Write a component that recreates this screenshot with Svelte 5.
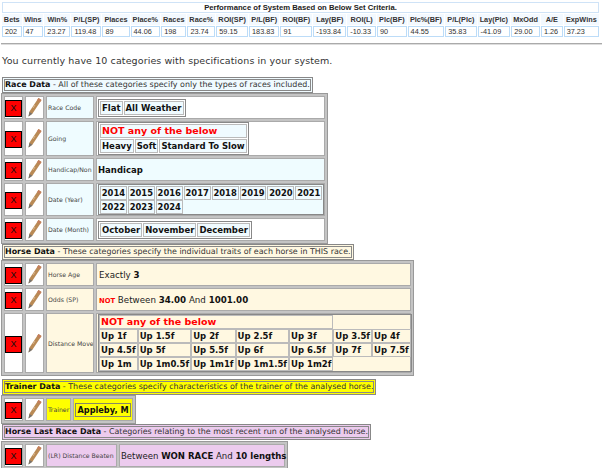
<script>
  const heads = ['Bets','Wins','Win%','P/L(SP)','Places','Place%','Races','Race%','ROI(SP)','P/L(BF)','ROI(BF)','Lay(BF)','ROI(L)','Plc(BF)','Plc%(BF)','P/L(Plc)','Lay(Plc)','MxOdd','A/E','ExpWins'];
  const vals = ['202','47','23.27','119.48','89','44.06','198','23.74','59.15','183.83','91','-193.84','-10.33','90','44.55','35.83','-41.09','29.00','1.26','37.23'];
  const years1 = ['2014','2015','2016','2017','2018','2019','2020','2021'];
  const years2 = ['2022','2023','2024'];
  const dist = [
    ['Up 1f','Up 1.5f','Up 2f','Up 2.5f','Up 3f','Up 3.5f','Up 4f'],
    ['Up 4.5f','Up 5f','Up 5.5f','Up 6f','Up 6.5f','Up 7f','Up 7.5f'],
    ['Up 1m','Up 1m0.5f','Up 1m1f','Up 1m1.5f','Up 1m2f']
  ];
</script>

{#snippet tools(h)}
  <td class="btn" style="height:{h}px"><span class="x">X</span></td>
  <td class="pen">
    <svg width="15" height="21" viewBox="0 0 15 21">
      <path d="M11.5 1 L14.5 3 L5.5 16.5 L1.5 19.5 L2.5 14.5 Z" fill="#b98a55" />
      <path d="M11.5 1 L14.5 3 L13 5.2 L10 3.2 Z" fill="#c47f5c" />
      <path d="M8 8 L6 11" stroke="#d8b389" stroke-width="1" />
      <path d="M2.4 15 L5.4 16.8 L1.5 19.5 Z" fill="#77736e" />
    </svg>
  </td>
{/snippet}

{#snippet chips(list)}
  <table class="chips"><tbody><tr>
    {#each list as c}<td>{c}</td>{/each}
  </tr></tbody></table>
{/snippet}

<table class="perf">
  <tbody>
    <tr><th colspan="20" class="ttl">Performance of System Based on Below Set Criteria.</th></tr>
    <tr>{#each heads as h}<th>{h}</th>{/each}</tr>
    <tr>{#each vals as v}<td>{v}</td>{/each}</tr>
  </tbody>
</table>
<hr />
<p class="intro">You currently have 10 categories with specifications in your system.</p>

<div class="head blue"><b>Race Data</b> - All of these categories specify only the types of races included.</div>
<table class="cat race">
  <tbody>
    <tr>
      {@render tools(20)}
      <td class="lab tint">Race Code</td>
      <td class="val">{@render chips(['Flat','All Weather'])}</td>
    </tr>
    <tr>
      {@render tools(32)}
      <td class="lab tint">Going</td>
      <td class="val">
        <table class="chips">
          <tbody>
            <tr><td class="no" colspan="3">NOT any of the below</td></tr>
            <tr><td>Heavy</td><td>Soft</td><td>Standard To Slow</td></tr>
          </tbody>
        </table>
      </td>
    </tr>
    <tr>
      {@render tools(21)}
      <td class="lab tint">Handicap/Non</td>
      <td class="val tint strong">Handicap</td>
    </tr>
    <tr>
      {@render tools(31)}
      <td class="lab tint">Date (Year)</td>
      <td class="val tint">
        <div class="wrapbox">
          <div class="line">{#each years1 as y}<span>{y}</span>{/each}</div>
          <div class="line">{#each years2 as y}<span>{y}</span>{/each}</div>
        </div>
      </td>
    </tr>
    <tr>
      {@render tools(20)}
      <td class="lab tint">Date (Month)</td>
      <td class="val">{@render chips(['October','November','December'])}</td>
    </tr>
  </tbody>
</table>

<div class="head cream"><b>Horse Data</b> - These categories specify the individual traits of each horse in THIS race.</div>
<table class="cat horse">
  <tbody>
    <tr>
      {@render tools(21)}
      <td class="lab cr">Horse Age</td>
      <td class="val cr txt">Exactly <b>3</b></td>
    </tr>
    <tr>
      {@render tools(20)}
      <td class="lab cr">Odds (SP)</td>
      <td class="val cr txt"><b class="not">NOT</b> Between <b>34.00</b> And <b>1001.00</b></td>
    </tr>
    <tr>
      {@render tools(58)}
      <td class="lab cr">Distance Move</td>
      <td class="val cr">
        <table class="chips dist">
          <tbody>
            <tr><td class="no" colspan="5">NOT any of the below</td></tr>
            {#each dist as row}
              <tr>{#each row as d}<td>{d}</td>{/each}</tr>
            {/each}
          </tbody>
        </table>
      </td>
    </tr>
  </tbody>
</table>

<div class="head yellow"><b>Trainer Data</b> - These categories specify characteristics of the trainer of the analysed horse.</div>
<table class="cat trainer-t">
  <tbody>
    <tr>
      {@render tools(19)}
      <td class="lab yel">Trainer</td>
      <td class="val yel trainer"><span>Appleby, M</span></td>
    </tr>
  </tbody>
</table>

<div class="head pink"><b>Horse Last Race Data</b> - Categories relating to the most recent run of the analysed horse.</div>
<table class="cat last-t">
  <tbody>
    <tr>
      {@render tools(18)}
      <td class="lab pk">(LR) Distance Beaten</td>
      <td class="val pk txt">Between <b>WON RACE</b> And <b>10 lengths</b></td>
    </tr>
  </tbody>
</table>

<style>
  :global(body) {
    margin: 0;
    background: #fff;
    font-family: "DejaVu Sans", sans-serif;
    color: #222;
    overflow: hidden;
  }
  table {
    border-collapse: separate;
  }
  .perf {
    width: 599px;
    margin: 1px 0 0 1px;
    border-spacing: 1px;
    font-family: "Liberation Sans", Arial, sans-serif;
    font-size: 7.3px;
  }
  .perf th {
    font-weight: bold;
    background: #f3f9ff;
    padding: 1px 1px;
    height: 9px;
    white-space: nowrap;
    color: #333;
  }
  .perf th.ttl {
    background: #fff;
    border: 1px solid #cfe3f7;
    padding: 0;
    color: #222;
    font-size: 7.7px;
  }
  .perf td {
    border: 1px solid #bcdcf8;
    padding: 0 2px;
    height: 9px;
    white-space: nowrap;
    color: #333;
  }
  hr {
    margin: 5px 0 0 1px;
    height: 0;
    border: 0;
    border-top: 1px solid #aaa;
    border-bottom: 1px solid #ddd;
  }
  .intro {
    margin: 10px 0 0 2px;
    font-size: 9.5px;
    line-height: 12px;
    letter-spacing: 0.1px;
    color: #333;
  }
  .head {
    display: table;
    margin: 10px 0 0 2px;
    border: 3px double #888;
    padding: 0;
    font-size: 7.95px;
    line-height: 10px;
    color: #333;
  }
  .head b {
    color: #111;
  }
  .blue {
    background: #f0fbff;
  }
  .cream {
    margin-top: 0;
    background: #fff8e1;
  }
  .yellow {
    margin-top: 3px;
    background: #ff0;
  }
  .pink {
    margin-top: 0;
    background: #eccbee;
  }
  .cat {
    margin-left: 1px;
    border: 1px solid #999;
    border-spacing: 2px;
    background: #c4c4c4;
    table-layout: fixed;
  }
  .race {
    width: 327px;
  }
  .horse {
    width: 413px;
  }
  .trainer-t {
    width: 135px;
  }
  .last-t {
    width: 287px;
    margin-top: 1px;
  }
  .cat > tbody > tr > td {
    border: 1px solid #aaa;
    padding: 0;
  }
  .btn {
    width: 17px;
    text-align: center;
    background: #fff;
  }
  .x {
    display: inline-block;
    width: 15px;
    height: 15px;
    background: #f00;
    border: 1px solid #000;
    color: #111;
    font: 9px/15px "Liberation Sans", Arial, sans-serif;
    vertical-align: middle;
  }
  .pen {
    width: 17px;
    text-align: center;
    background: #fff;
  }
  .pen svg {
    display: block;
    margin: auto;
  }
  .lab {
    width: 44px;
    font-size: 6.2px;
    color: #444;
    white-space: nowrap;
    padding: 0 1px !important;
    overflow: hidden;
  }
  .tint {
    background: #effcff;
  }
  .cr {
    background: #fff8e1;
  }
  .lab.yel {
    background: #ff0;
    width: 21px;
  }
  .val {
    padding: 0 1px !important;
    font-size: 8.7px;
    background: #fff;
    white-space: nowrap;
  }
  .val.cr {
    background: #fff8e1;
  }
  .val.tint {
    background: #effcff;
  }
  .val.yel {
    background: #ff0;
  }
  .val.pk {
    background: #eccbee;
    font-size: 8.55px;
    padding-left: 1px !important;
  }
  .lab.pk {
    background: #eccbee;
    width: 67px;
  }
  .strong {
    font-weight: bold;
    font-size: 8.5px;
    color: #111;
  }
  .txt {
    padding-left: 2px !important;
    padding-right: 0 !important;
  }
  .txt b {
    color: #111;
  }
  .not {
    color: #f00 !important;
    font-size: 6.8px;
  }
  .chips {
    border: 1px solid #888;
    border-spacing: 1px;
    font-size: 8.5px;
    font-weight: bold;
    color: #111;
  }
  .chips td {
    border: 1px solid #bbb;
    background: #f0fbff;
    padding: 1px;
    line-height: 10px;
    white-space: nowrap;
  }
  .chips td.no {
    color: #f00;
    font-size: 9.5px;
  }
  .dist {
    width: 100%;
    border-spacing: 0;
  }
  .dist td {
    background: #fff8e1;
    padding: 1px;
  }
  .wrapbox {
    display: block;
    width: fit-content;
    border: 1px solid #888;
    padding: 0.5px 1px;
    font-size: 8.4px;
    font-weight: bold;
    color: #111;
  }
  .line {
    display: flex;
    gap: 1px;
  }
  .line span {
    border: 1px solid #bbb;
    background: #f0fbff;
    padding: 1px 0.8px;
    line-height: 10px;
  }
  .trainer {
    padding: 1px !important;
  }
  .trainer span {
    display: block;
    border: 1px solid #886;
    padding: 1px 0;
    text-align: center;
    font-size: 8.2px;
    font-weight: bold;
    color: #111;
    white-space: nowrap;
  }
</style>
